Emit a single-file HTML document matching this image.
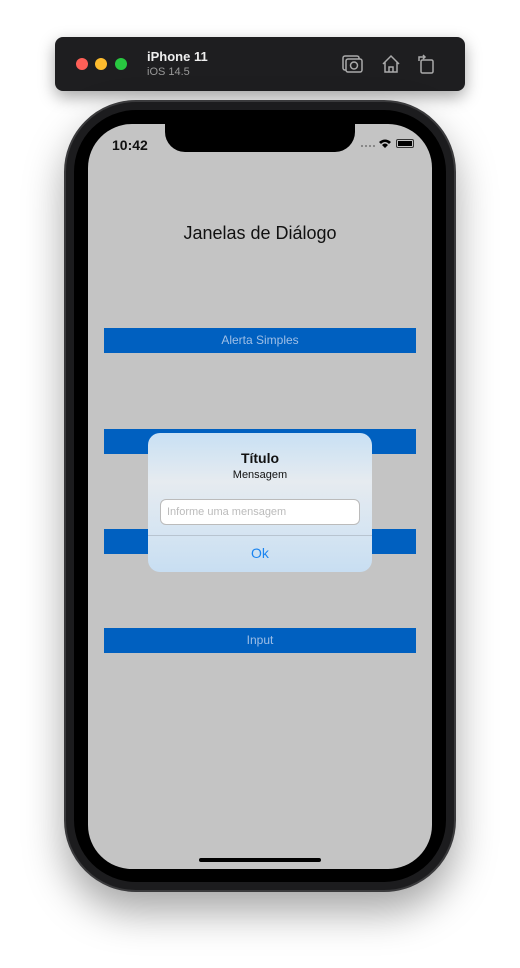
<!DOCTYPE html>
<html><head><meta charset="utf-8"><style>
*{margin:0;padding:0;box-sizing:border-box}
body{width:520px;height:968px;background:#fff;position:relative;overflow:hidden;font-family:"Liberation Sans",sans-serif}
.bar{position:absolute;left:55px;top:37px;width:410px;height:54px;background:#1e1e20;border-radius:8px;box-shadow:0 6px 16px rgba(0,0,0,.35)}
.dot{position:absolute;top:21px;width:12px;height:12px;border-radius:50%}
.phone{position:absolute;left:64px;top:100px;width:392px;height:792px;border-radius:72px;background:#1c1c1e;box-shadow:0 20px 40px rgba(0,0,0,.35);border:2px solid #3a3a3c}
.inner{position:absolute;left:8px;top:8px;right:8px;bottom:8px;border-radius:62px;background:#000}
.screen{position:absolute;left:88px;top:124px;width:344px;height:745px;border-radius:44px;background:#c4c4c4;overflow:hidden}
.notch{position:absolute;left:77px;top:0;width:190px;height:28px;background:#000;border-radius:0 0 20px 20px}
.btn{position:absolute;left:16px;width:312px;height:25px;background:#0060c0;color:#9fbfe6;font-size:12px;text-align:center;line-height:25px}
.dlg{position:absolute;left:60px;top:309px;width:224px;height:139px;border-radius:12px;background:linear-gradient(#c8e0f4,#e6ebf0 35%,#d4e4f2 75%,#c8def2);text-align:center}
</style></head><body>
<div class="bar">
<div class="dot" style="left:21px;background:#fe5f57"></div>
<div class="dot" style="left:40px;background:#febc2e"></div>
<div class="dot" style="left:60px;background:#28c840"></div>
<div style="position:absolute;left:92px;top:12px;color:#eee;font-weight:bold;font-size:13px">iPhone 11</div>
<div style="position:absolute;left:92px;top:29px;color:#999;font-size:11px">iOS 14.5</div>
<svg style="position:absolute;left:286px;top:15px" width="100" height="24" fill="none" stroke="#aaa" stroke-width="1.5">
<rect x="2" y="4" width="16" height="14" rx="2"/><rect x="5" y="7" width="16" height="13" rx="2" fill="#1e1e20"/><circle cx="13" cy="13.5" r="3.5"/>
<path d="M42 12 L50 4 L58 12 M44 10 V20 H56 V10 M48 20 V15 H52 V20"/>
<rect x="80" y="8" width="12" height="13" rx="1.5"/><path d="M78 9 V5 H84 M82 3 L84 5 L82 7"/>
</svg>
</div>
<div class="phone"><div class="inner"></div></div>
<div class="screen">
<div class="notch"></div>
<div style="position:absolute;left:24px;top:13px;font-size:14px;font-weight:bold;color:#111">10:42</div>
<div style="position:absolute;left:273px;top:21px;width:14px;height:2px;border-top:2px dotted #888"></div>
<svg style="position:absolute;left:290px;top:14px" width="14" height="11"><path d="M1 4 Q7 -1 13 4 L11 6 Q7 2 3 6Z M4 7 Q7 4 10 7 L7 10Z" fill="#000"/></svg>
<div style="position:absolute;left:308px;top:15px;width:18px;height:9px;border:1px solid #333;border-radius:2px;padding:1px"><div style="background:#000;width:100%;height:100%"></div></div>
<div style="position:absolute;left:0;width:344px;top:99px;text-align:center;font-size:18px;color:#111">Janelas de Diálogo</div>
<div class="btn" style="top:204px">Alerta Simples</div>
<div class="btn" style="top:305px"></div>
<div class="btn" style="top:405px"></div>
<div class="btn" style="top:504px">Input</div>
<div class="dlg">
<div style="position:absolute;top:17px;width:100%;font-weight:bold;font-size:14px;color:#111">Título</div>
<div style="position:absolute;top:36px;width:100%;font-size:11px;color:#111">Mensagem</div>
<div style="position:absolute;left:12px;top:66px;width:200px;height:26px;background:#fff;border:1px solid #bbb;border-radius:6px;font-size:11px;color:#bbb;text-align:left;padding-left:6px;line-height:24px">Informe uma mensagem</div>
<div style="position:absolute;left:0;top:102px;width:100%;height:1px;background:#b8c4d0"></div>
<div style="position:absolute;top:112px;width:100%;font-size:14px;color:#1a84f0">Ok</div>
</div>
<div style="position:absolute;left:111px;top:734px;width:122px;height:4px;border-radius:2px;background:#000"></div>
</div>
</body></html>
